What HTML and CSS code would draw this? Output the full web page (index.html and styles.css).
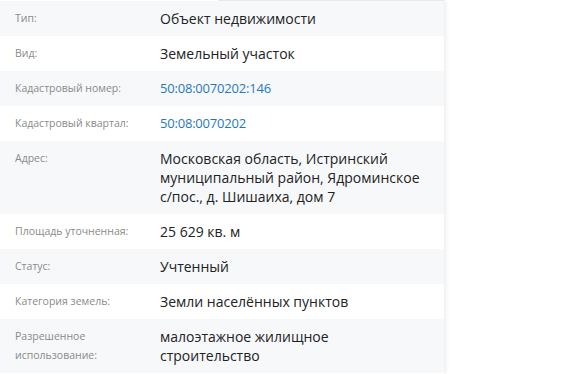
FILE: index.html
```html
<!DOCTYPE html>
<html lang="ru">
<head>
<meta charset="utf-8">
<link rel="stylesheet" href="styles.css">
</head>
<body>
<div class="panel">
  <div class="topline"></div>
  <div class="row"><div class="label">Тип:</div><div class="value">Объект недвижимости</div></div>
  <div class="row"><div class="label">Вид:</div><div class="value">Земельный участок</div></div>
  <div class="row"><div class="label">Кадастровый номер:</div><div class="value link-cell"><a class="link" href="#">50:08:0070202:146</a></div></div>
  <div class="row"><div class="label">Кадастровый квартал:</div><div class="value link-cell"><a class="link" href="#">50:08:0070202</a></div></div>
  <div class="row"><div class="label">Адрес:</div><div class="value">Московская область, Истринский муниципальный район, Ядроминское <span class="nowrap">с/пос.,</span> д. Шишаиха, дом 7</div></div>
  <div class="row"><div class="label">Площадь уточненная:</div><div class="value">25 629 кв. м</div></div>
  <div class="row"><div class="label">Статус:</div><div class="value">Учтенный</div></div>
  <div class="row"><div class="label">Категория земель:</div><div class="value">Земли населённых пунктов</div></div>
  <div class="row"><div class="label">Разрешенное использование:</div><div class="value">малоэтажное жилищное строительство</div></div>
</div>
</body>
</html>
```
FILE: styles.css
```css
html, body {
  margin: 0;
  padding: 0;
  background: #ffffff;
}
body {
  font-family: "Open Sans", "Noto Sans", sans-serif;
  color: #333;
}
.panel {
  width: 444px;
  min-height: 374px;
  background: #fff;
  box-shadow: 2px 0 4px rgba(0, 0, 0, 0.07);
}
.topline {
  height: 1px;
  margin-left: 218px;
  background: #e7e9ed;
}
.row {
  display: flex;
  padding: 8px 0;
}
.row:nth-child(even) {
  background: #f7f8fa;
}
.label {
  width: 145px;
  padding-left: 15px;
  flex-shrink: 0;
  font-size: 10.5px;
  line-height: 19px;
  color: #8a8a8a;
}
.value {
  width: 266px;
  font-size: 14px;
  line-height: 19px;
  color: #222;
}
.value.link-cell {
  font-size: 13px;
  letter-spacing: -0.2px;
}
.nowrap {
  white-space: nowrap;
}
.link {
  color: #1f78c1;
  text-decoration: none;
}
```
